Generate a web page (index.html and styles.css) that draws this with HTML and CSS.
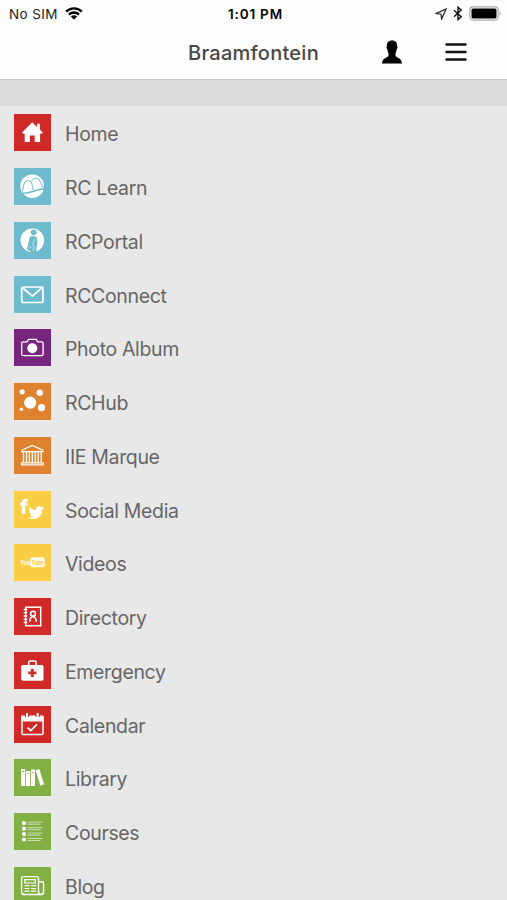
FILE: index.html
```html
<!DOCTYPE html>
<html lang="en">
<head>
    <meta charset="UTF-8">
    <meta name="viewport" content="width=device-width, initial-scale=1.0">
    <title>Braamfontein</title>
    <link rel="stylesheet" href="styles.css">
</head>
<body>
    <header class="header">
        <!-- Status bar -->
        <div class="status-bar">
            <div class="status-left">
                <span class="carrier">No SIM</span>
                <svg class="wifi" width="18" height="13" viewBox="0 0 18 13">
                    <path d="M1.2 4.6a11 11 0 0 1 15.6 0M4 7.6a7 7 0 0 1 10 0" fill="none" stroke="#000" stroke-width="2.3"/>
                    <path d="M5.9 9.6a4.4 4.4 0 0 1 6.2 0L9 12.7z"/>
                </svg>
            </div>
            <span class="time">1:01 PM</span>
            <div class="status-right">
                <svg width="12" height="12" viewBox="0 0 12 12">
                    <path d="M1 5.6L11 1L6.6 11L6 6.2z" fill="none" stroke="#222" stroke-width="1.2"/>
                </svg>
                <svg width="10" height="15" viewBox="0 0 10 15">
                    <path d="M1 4.2l7.2 6.5L5 13.6V1.2l3.2 2.9L1 10.7" fill="none" stroke="#111" stroke-width="1.4"/>
                </svg>
                <svg width="33" height="15" viewBox="0 0 33 15">
                    <rect x=".8" y=".9" width="28.4" height="13.2" rx="3.5" fill="none" stroke="#aaa" stroke-width="1.2"/>
                    <rect x="2.5" y="2.6" width="25" height="9.8" rx="1.6"/>
                    <path d="M30.6 5.3q2 2.2 0 4.4z" fill="#999"/>
                </svg>
            </div>
        </div>

        <!-- Title bar -->
        <div class="title-bar">
            <h1>Braamfontein</h1>
            <div class="actions">
                <svg width="22" height="24" viewBox="0 0 22 24">
                    <path d="M11 .5c3.800 0 5.300 2.300 5.100 5.600.7.8.4 2.500-.4 3.200-.3 2-.7 3-1.200 3.900v2.300c.4 2.500 6.500 2.100 6.500 8.100H1c0-6 6.100-5.600 6.500-8.100v-2.300c-.5-.9-.9-1.900-1.200-3.900-.8-.7-1.100-2.400-.4-3.200C5.700 2.800 7.200.5 11 .5z"/>
                </svg>
                <svg width="22" height="20" viewBox="0 0 22 20">
                    <path d="M.5 2.500h21M.5 10h21M.5 17.500h21" stroke="#111" stroke-width="2.600"/>
                </svg>
            </div>
        </div>
    </header>

    <!-- Menu -->
    <ul class="menu">
        <li>
            <svg class="icon red" viewBox="0 0 37 37">
                <path d="M18.200 8.300l4.800 4.600V9.800h2.900V15.500l2.900 3-1.200 1.200h-1.500V28h-5.400v-6.500h-4.800V28h-5.200v-8.300H9.100l-1-1.200z"/>
            </svg>
            <span>Home</span>
        </li>
        <li>
            <svg class="icon blue" viewBox="0 0 37 37">
                <circle cx="18.200" cy="18.200" r="11.800"/>
                <path class="cut-line" d="M8.500 23.500L10.500 14q3-3 7 0l1.700 8.200M17.500 12.500q4-3.700 7.500-1l4.800 9"/>
                <path class="cut-line" d="M8 25.500q6-.3 11.200-2.200 5-2 11-2.300" stroke-width="1.600"/>
            </svg>
            <span>RC Learn</span>
        </li>
        <li>
            <svg class="icon blue" viewBox="0 0 37 37">
                <circle cx="18.300" cy="18.300" r="11.800"/>
                <circle class="cut" cx="19.700" cy="10.300" r="2.900"/>
                <path class="cut" d="M16 14.500q4-1.500 7 1l.5 6-1 3V30h-5.500l-4-3 1.500-6.500z"/>
                <path class="line" d="M21 17l-2.500 5 1.500 2-1 5M14.500 24l3 2" stroke-width=".6"/>
            </svg>
            <span>RCPortal</span>
        </li>
        <li>
            <svg class="icon blue" viewBox="0 0 37 37">
                <rect class="line" x="7.700" y="11" width="21.300" height="15.500" rx="1.800" stroke-width="1.700"/>
                <path class="line" d="M9 12l9.300 8.200L27.700 12" stroke-width="1.700"/>
            </svg>
            <span>RCConnect</span>
        </li>
        <li>
            <svg class="icon purple" viewBox="0 0 37 37">
                <path class="line" d="M9 12.900h4l1.500-2.500h7.700l1.500 2.500h3.800q1.600 0 1.600 1.600v10.500q0 1.600-1.600 1.600H9.300q-1.600 0-1.600-1.600V14.500q0-1.600 1.300-1.600z" stroke-width="1.300"/>
                <circle cx="18.300" cy="19.300" r="5"/>
            </svg>
            <span>Photo Album</span>
        </li>
        <li>
            <svg class="icon orange" viewBox="0 0 37 37">
                <circle cx="16.200" cy="19.700" r="6.100"/>
                <circle cx="8.200" cy="8.800" r="2.600"/>
                <circle cx="25.700" cy="9.700" r="3.200"/>
                <circle cx="27.500" cy="24.700" r="3.600"/>
                <circle cx="7.400" cy="26.200" r="1.700"/>
            </svg>
            <span>RCHub</span>
        </li>
        <li>
            <svg class="icon orange" viewBox="0 0 37 37">
                <path class="line" d="M7.800 13.200L18.300 8.500l10.500 4.700v1.500h-21zM7.500 27.800v-2h21.600v2z" stroke-width="1.200"/>
                <path class="line" d="M9.500 15v10.500M12.500 15v10.500M15.300 15v10.500M18.300 15v10.500M21.300 15v10.500M24.200 15v10.500M27.200 15v10.500" stroke-width="1.300"/>
            </svg>
            <span>IIE Marque</span>
        </li>
        <li>
            <svg class="icon yellow" viewBox="0 0 37 37">
                <text class="fb" x="6" y="22.700">f</text>
                <path transform="translate(14.300 13.800) scale(.65)" d="M24 4.600a10 10 0 0 1-2.800.8 5 5 0 0 0 2.100-2.700 10 10 0 0 1-3.100 1.200 4.900 4.900 0 0 0-8.400 4.500A14 14 0 0 1 1.700 3.200a4.900 4.900 0 0 0 1.500 6.500 5 5 0 0 1-2.200-.6 4.900 4.900 0 0 0 3.900 4.900 5 5 0 0 1-2.200.1 4.900 4.900 0 0 0 4.600 3.400A9.900 9.900 0 0 1 0 19.500 14 14 0 0 0 21.500 7.100 10 10 0 0 0 24 4.600z"/>
            </svg>
            <span>Social Media</span>
        </li>
        <li>
            <svg class="icon yellow" viewBox="0 0 37 37">
                <text class="yt" x="6.300" y="20.800" textLength="9.500" lengthAdjust="spacingAndGlyphs">You</text>
                <rect x="16" y="13.300" width="14.800" height="9.900" rx="2.800" opacity=".85"/>
                <text class="yt cut" x="17.500" y="20.800" textLength="12" lengthAdjust="spacingAndGlyphs">Tube</text>
            </svg>
            <span>Videos</span>
        </li>
        <li>
            <svg class="icon red" viewBox="0 0 37 37">
                <rect class="line" x="11.700" y="9.200" width="15" height="18.500" stroke-width="1.500"/>
                <path class="line" d="M9.700 11.500h3.500M9.700 14.700h3.500M9.700 18h3.500M9.700 21.300h3.500M9.700 24.500h3.500" stroke-width="1.300"/>
                <circle class="line" cx="19" cy="15.700" r="2.400" stroke-width="1.600"/>
                <path class="line" d="M15.700 23.700q0-4.500 3.300-5.200q3.300.7 3.300 5.200" stroke-width="1.600"/>
            </svg>
            <span>Directory</span>
        </li>
        <li>
            <svg class="icon red" viewBox="0 0 37 37">
                <rect x="7.200" y="13" width="22.300" height="15.700" rx="1.600"/>
                <path class="line" d="M14.700 13.500V10.500q0-1.500 1.500-1.500h4.500q1.500 0 1.500 1.500v3" stroke-width="1.500"/>
                <path class="cut" d="M16.900 16.800h2.800v2.700h2.700v2.800h-2.700V25h-2.800v-2.700h-2.700v-2.800h2.700z"/>
            </svg>
            <span>Emergency</span>
        </li>
        <li>
            <svg class="icon red" viewBox="0 0 37 37">
                <rect class="line" x="8" y="11" width="21" height="17.500" rx="1" stroke-width="1.500"/>
                <path d="M7.300 9.500h22.200v6H7.300z"/>
                <path class="cut-line" d="M13 7.500v3.500M23.600 7.500v3.500" stroke-width="4.200"/>
                <path class="line" d="M13 7v4M23.600 7v4" stroke-width="2"/>
                <path class="line" d="M13.700 21.700l3 2.900 6.300-6.300" stroke-width="1.700"/>
            </svg>
            <span>Calendar</span>
        </li>
        <li>
            <svg class="icon green" viewBox="0 0 37 37">
                <path d="M7.200 10h4v17h-4zM12 12h4.200v15H12zM17 10.500h4V27h-4zM21.600 11.200l3.700-1.300 4.700 15.400-3.600 1.500z"/>
                <path class="cut-line" d="M8 12.500h2.400M13 14.500h2.200M17.800 13.500h2.400" stroke-width=".7"/>
            </svg>
            <span>Library</span>
        </li>
        <li>
            <svg class="icon green" viewBox="0 0 37 37">
                <circle cx="10" cy="10.200" r="2.100"/>
                <circle cx="10" cy="15.700" r="2.100"/>
                <circle cx="10" cy="21.100" r="2.100"/>
                <circle cx="10" cy="26.500" r="2.100"/>
                <path class="line" opacity=".6" d="M13.500 9.200h15M13.500 11.200h13M13.500 14.700h15M13.500 16.700h13M13.500 20.100h15M13.500 22.100h13M13.500 25.500h15M13.500 27.500h13"/>
            </svg>
            <span>Courses</span>
        </li>
        <li>
            <svg class="icon green" viewBox="0 0 37 37">
                <path class="line" d="M24.500 24.500V11.500q0-1.900-2-1.900H9.600q-2 0-2 1.900v13.500q0 2.500 2.500 2.500h17q2.500 0 2.500-2.500v-9q0-1.200-1.200-1.200H24.500v10q0 2.700 2.600 2.700" stroke-width="1.400"/>
                <path class="line" d="M10.800 12.700h10.500v3.300H10.800zM10.500 18.700h5M17 18.700h5M10.500 21.500h5M17 21.500h5M10.500 24.200h5M17 24.200h5" stroke-width="1.200"/>
            </svg>
            <span>Blog</span>
        </li>
    </ul>
</body>
</html>
```
FILE: styles.css
```css
* {
    box-sizing: border-box;
}

body {
    margin: 0;
    height: 900px;
    overflow: hidden;
    background-color: #e8e8e8;
    font-family: Inter, Roboto, sans-serif;
    color: #666;
}

/* Top of the screen */
.header {
    height: 80px;
    background-color: #fdfdfd;
    border-bottom: 1px solid #c8c8c8;
}

.status-bar {
    display: grid;
    grid-template-columns: 1fr auto 1fr;
    align-items: center;
    height: 27px;
    padding: 0 5px 0 9px;
    font-size: 13.5px;
    color: #000;
}

.status-left,
.status-right {
    display: flex;
    align-items: center;
    gap: 7px;
}

.carrier {
    letter-spacing: 0.4px;
    color: #222;
}

.status-right {
    justify-content: flex-end;
    gap: 6px;
}

.time {
    font-weight: 600;
    font-size: 13.5px;
    letter-spacing: 0.8px;
}

.title-bar {
    display: grid;
    grid-template-columns: 1fr auto 1fr;
    align-items: center;
    height: 50px;
}

.title-bar h1 {
    grid-column: 2;
    margin: 0;
    padding-top: 2px;
    font-size: 20px;
    font-weight: 550;
    letter-spacing: 0.25px;
    color: #484848;
}

.actions {
    display: flex;
    align-items: center;
    justify-content: flex-end;
    gap: 42px;
    padding-right: 40px;
}

/* Menu list */
.menu {
    margin: 0;
    padding: 0;
    list-style: none;
    border-top: 26px solid #dbdbdb;
}

.menu li {
    display: flex;
    align-items: center;
    gap: 14px;
    height: 53.75px;
    padding-top: 1px;
    padding-left: 14px;
    border-bottom: 1px solid #e4e4e4;
    font-size: 19.5px;
    letter-spacing: -0.35px;
}

.menu span {
    padding-top: 3px;
}

/* Icon tiles */
.icon {
    flex: none;
    width: 37px;
    height: 37px;
    fill: #fff;
    background-color: var(--tile);
}

.red { --tile: #cf2a27; }
.blue { --tile: #6dbbcd; }
.purple { --tile: #782580; }
.orange { --tile: #df8230; }
.yellow { --tile: #f8ce46; }
.green { --tile: #82b044; }

.line {
    fill: none;
    stroke: #fff;
}

.cut {
    fill: var(--tile);
}

.cut-line {
    fill: none;
    stroke: var(--tile);
}

.fb {
    font-size: 20px;
    font-weight: 800;
}

.yt {
    font-size: 6.5px;
    font-weight: 700;
    letter-spacing: 0;
}
```
